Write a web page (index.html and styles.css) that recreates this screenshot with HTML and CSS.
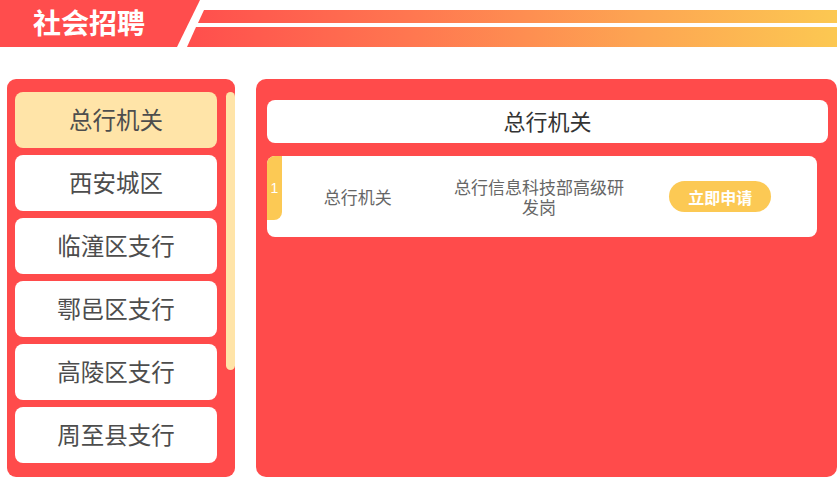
FILE: index.html
```html
<!DOCTYPE html>
<html lang="zh-CN">
<head>
<meta charset="utf-8">
<title>社会招聘</title>
<link rel="stylesheet" href="styles.css">
</head>
<body>
<header class="banner">
  <div class="banner-title">社会招聘</div>
  <div class="banner-bars">
    <div class="bar bar-top"></div>
    <div class="bar bar-bottom"></div>
  </div>
</header>
<main class="main">
  <aside class="side">
    <ul class="side-list">
      <li class="side-item active">总行机关</li>
      <li class="side-item">西安城区</li>
      <li class="side-item">临潼区支行</li>
      <li class="side-item">鄠邑区支行</li>
      <li class="side-item">高陵区支行</li>
      <li class="side-item">周至县支行</li>
    </ul>
    <div class="side-scroll"><div class="side-thumb"></div></div>
  </aside>
  <section class="content">
    <div class="content-head">总行机关</div>
    <div class="job">
      <span class="job-no">1</span>
      <div class="job-col">总行机关</div>
      <div class="job-col">总行信息科技部高级研发岗</div>
      <div class="job-col"><button class="apply">立即申请</button></div>
    </div>
  </section>
</main>
</body>
</html>
```

FILE: styles.css
```css
* { box-sizing: border-box; }
html, body { margin: 0; padding: 0; }
body {
  background: #fff;
  font-family: "Noto Sans CJK SC", "Noto Sans", sans-serif;
  width: 837px;
  height: 478px;
  overflow: hidden;
}

.banner {
  display: flex;
  height: 47px;
}
.banner-title {
  width: 200px;
  height: 47px;
  flex: none;
  background: #ff4d4d;
  clip-path: polygon(0 0, 100% 0, calc(100% - 23px) 100%, 0 100%);
  color: #fff;
  font-weight: 700;
  font-size: 28px;
  line-height: 45px;
  padding-left: 33px;
}
.banner-bars {
  flex: 1;
  margin-left: -17px;
  display: flex;
  flex-direction: column;
  padding-top: 10px;
  gap: 4px;
}
.bar {
  background: linear-gradient(90deg, #ff4d4d 0%, #ff7750 35%, #fda552 70%, #fcc852 100%);
}
.bar-top {
  height: 13px;
  clip-path: polygon(21px 0, 100% 0, 100% 100%, 15px 100%);
}
.bar-bottom {
  height: 20px;
  clip-path: polygon(13px 0, 100% 0, 100% 100%, 4px 100%);
}

.main {
  display: flex;
  gap: 21px;
  margin-top: 32px;
  padding-left: 7px;
}

.side {
  width: 228px;
  height: 398px;
  flex: none;
  background: #ff4b4b;
  border-radius: 9px;
  padding: 13px 0 0 8px;
  display: flex;
  gap: 9px;
  overflow: hidden;
}
.side-list {
  list-style: none;
  margin: 0;
  padding: 0;
  width: 202px;
  display: flex;
  flex-direction: column;
  gap: 7px;
}
.side-item {
  height: 56px;
  flex: none;
  background: #fff;
  border-radius: 8px;
  display: flex;
  align-items: center;
  justify-content: center;
  font-size: 23.5px;
  color: #4d4d4d;
  padding-bottom: 3px;
}
.side-item.active {
  background: #ffe4a8;
}
.side-scroll {
  width: 9px;
  flex: none;
}
.side-thumb {
  height: 278px;
  background: #ffe4a8;
  border-radius: 5px;
}

.content {
  width: 581px;
  height: 398px;
  flex: none;
  background: #ff4b4b;
  border-radius: 10px;
  padding: 21px 9px 0 11px;
}
.content-head {
  height: 43px;
  background: #fff;
  border-radius: 8px;
  display: flex;
  align-items: center;
  justify-content: center;
  font-size: 22px;
  color: #333;
  padding-bottom: 3px;
}
.job {
  position: relative;
  margin-top: 13px;
  width: 550px;
  height: 81px;
  background: #fff;
  border-radius: 8px;
  display: grid;
  grid-template-columns: repeat(3, 1fr);
  align-items: center;
  padding-right: 6px;
}
.job-no {
  position: absolute;
  left: 0;
  top: 0;
  width: 15px;
  height: 64px;
  background: #fcc954;
  border-radius: 8px 0 8px 0;
  color: #fff;
  font-family: "Liberation Sans", Arial, sans-serif;
  font-size: 14px;
  display: flex;
  align-items: center;
  justify-content: center;
}
.job-col {
  text-align: center;
  font-size: 17px;
  line-height: 20px;
  color: #666;
  display: flex;
  justify-content: center;
}
.apply {
  width: 102px;
  height: 31px;
  border: none;
  border-radius: 16px;
  background: #fcc954;
  color: #fff;
  font-family: inherit;
  font-weight: 700;
  font-size: 16px;
  padding: 0;
  cursor: pointer;
}
```
